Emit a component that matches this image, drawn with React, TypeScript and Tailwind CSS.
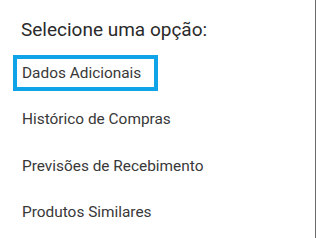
import React from "react"

const options = [
  "Dados Adicionais",
  "Histórico de Compras",
  "Previsões de Recebimento",
  "Produtos Similares",
]

export default function App() {
  return (
    <div
      className="w-[316px] h-[238px] bg-white border-r border-[#6b6b6b] overflow-hidden"
      style={{ fontFamily: "Roboto, 'Noto Sans', sans-serif" }}
    >
      <div className="h-[50px] pl-[21px] pt-[20px] text-[19px] leading-[20px] text-[#2a2a2a]">
        Selecione uma opção:
      </div>

      <ul className="pl-[13px]">
        {options.map((label, i) => (
          <li key={label} className="h-[46.5px] flex items-center">
            <div
              className={
                i === 0
                  ? "h-[36px] flex items-center pl-[5px] pr-[13px] border-4 border-[#0fa4e8] text-[15.4px] text-[#383838]"
                  : "h-[36px] flex items-center pl-[5px] pr-[13px] border-4 border-transparent text-[15.4px] text-[#383838]"
              }
            >
              {label}
            </div>
          </li>
        ))}
      </ul>
    </div>
  )
}
